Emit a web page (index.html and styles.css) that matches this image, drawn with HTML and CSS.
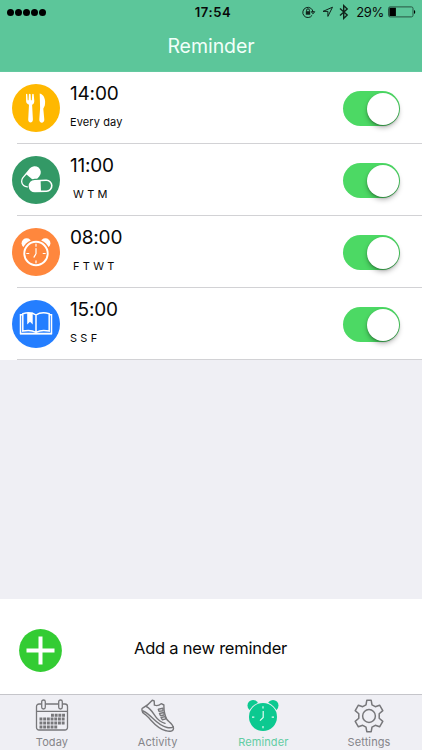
FILE: index.html
```html
<!DOCTYPE html>
<html lang="en">
<head>
<meta charset="utf-8">
<title>Reminder</title>
<link rel="stylesheet" href="styles.css">
</head>
<body>
<div class="app">
  <header class="header">
    <div class="status">
      <div class="signal"><i></i><i></i><i></i><i></i><i></i></div>
      <div class="clock">17:54</div>
      <div class="indicators">
        <svg width="14" height="12" viewBox="0 0 14 12" fill="none" stroke="#10231b" stroke-width="1"><path d="M10.2 9.2A5.1 5.1 0 1 1 11 6.2M9.3 5.7h3.4L11 7.8z"/><path d="M4.6 5.5V4.2a1.4 1.4 0 0 1 2.800 0v1.300"/><path d="M3.800 5.200h4.400v3.500H3.800z" fill="#10231b" stroke="none"/></svg>
        <svg class="loc" width="12" height="12" viewBox="0 0 12 12" fill="none" stroke="#10231b" stroke-width="1"><path d="M10.500 1.200 1 5.400h4.900v5z"/></svg>
        <svg class="bt" width="10" height="16" viewBox="0 0 10 16" fill="none" stroke="#10231b" stroke-width="1.400"><path d="m1 4.600 7.200 6.500L4.700 14.400V1.600l3.500 3.300L1 11.400"/></svg>
        <span class="percent">29%</span>
        <svg class="battery" width="28" height="12" viewBox="0 0 28 12"><rect x=".5" y=".9" width="24.500" height="10" rx="1.600" fill="none" stroke="#275542"/><path d="M1.400 1.800h6.500v8.200H1.400zM26 4c1.700.6 1.700 3.300 0 4z" fill="#000"/></svg>
      </div>
    </div>
    <h1 class="title">Reminder</h1>
  </header>

  <main class="list">
    <section class="row">
      <svg class="badge" viewBox="0 0 48 48"><circle cx="24" cy="24" r="24" fill="#ffb800"/><g fill="#fff"><path d="M14 10.300q.7-1.200 1.300 0l.4 6h.9l.3-6q.9-1.200 1.700 0l.3 6h.9l.4-6q.8-1.200 1.500 0l.6 6.600c0 2.100-.8 3-2.200 3.800l.8 14.900c.1 4-4.800 4-4.700 0l.8-14.900c-1.900-.8-2.900-1.800-2.900-4z"/><path d="M27.700 9.600c4.200.7 6.400 6.400 5.100 11.900l-1.500 3.200 1 10.800c.2 4.200-5.200 4.200-5 0l.8-11.600z"/></g></svg>
      <div class="info"><div class="time">14:00</div><div class="days every">Every day</div></div>
      <div class="switch"><i></i></div>
    </section>
    <section class="row">
      <svg class="badge" viewBox="0 0 48 48"><circle cx="24" cy="24" r="24" fill="#339966"/><g transform="translate(18.900 20.800) rotate(-50)"><rect x="-12" y="-6.200" width="24" height="12.400" rx="6.200" fill="#fff"/><path d="M-1-4.900h-4.800a4.900 4.900 0 0 0 0 9.800H-1z" fill="#339966"/></g><g transform="translate(28.600 29.900) rotate(-2)"><rect x="-13" y="-7.300" width="26" height="14.600" rx="7.300" fill="#339966"/><rect x="-12" y="-6.200" width="24" height="12.400" rx="6.200" fill="#fff"/><path d="M.2-4.700h5.500a4.700 4.700 0 0 1 0 9.400H.2z" fill="#339966"/></g></svg>
      <div class="info"><div class="time t11">11:00</div><div class="days pad wtm">W T M</div></div>
      <div class="switch"><i></i></div>
    </section>
    <section class="row">
      <svg class="badge" viewBox="0 0 48 48"><circle cx="24" cy="24" r="24" fill="#ff873d"/><circle cx="14.600" cy="15.200" r="5" fill="#fff"/><circle cx="33.400" cy="15.200" r="5" fill="#fff"/><circle cx="24" cy="25.500" r="14" fill="#ff873d"/><g fill="none" stroke="#fff" stroke-linecap="round"><circle cx="24" cy="25.500" r="11.700" stroke-width="1.900"/><path d="M24 16.200v2M24 32.800v2M14.800 25.500h2M31.200 25.500h2M24 20.500v5.200l-2 3.400" stroke-width="1.200"/></g></svg>
      <div class="info"><div class="time t08">08:00</div><div class="days pad ftwt">F T W T</div></div>
      <div class="switch"><i></i></div>
    </section>
    <section class="row">
      <svg class="badge" viewBox="0 0 48 48"><circle cx="24" cy="24" r="24" fill="#247eff"/><g fill="none" stroke="#fff" stroke-width="1.500"><path d="M24 15c-3.600-2.400-8.400-2.600-13.200-1.300v17.400c5.100-1.100 9.500-.8 13.200 1.200 3.700-2 8.100-2.300 13.200-1.200V13.700C32.400 12.400 27.600 12.600 24 15zv17"/><path d="M10.800 14.800H8.500v18.600h31V14.800h-2.300"/></g><path d="M8 33h32v1.500H8zM15.200 12.700h5.500v11.800L18 21.700l-2.800 2.800z" fill="#fff"/></svg>
      <div class="info"><div class="time t15">15:00</div><div class="days ssf">S S F</div></div>
      <div class="switch"><i></i></div>
    </section>
  </main>

  <section class="add">
    <svg class="plus" viewBox="0 0 43 43"><circle cx="21.500" cy="21.500" r="21.400" fill="#33cc33"/><path d="M21.500 7.500v28M7.500 21.500h28" stroke="#fff" stroke-width="4"/></svg>
    <span class="add-label">Add a new reminder</span>
  </section>

  <nav class="tabs">
    <div class="tab">
      <svg width="34" height="34" viewBox="0 0 34 34" fill="none" stroke="#77777a" stroke-width="1.300"><path d="M6.500 5H4a2.500 2.500 0 0 0-2.500 2.500v21A2.500 2.500 0 0 0 4 31h26a2.500 2.500 0 0 0 2.500-2.500v-21A2.500 2.500 0 0 0 30 5h-2.500M10.500 5h13M1.500 12.300h31"/><rect x="6.700" y="1" width="3.600" height="9" rx="1.800"/><rect x="23.700" y="1" width="3.600" height="9" rx="1.800"/><path d="M16 16.200h14M4.500 20h25.500M4.500 24h25.500M4.500 28h18" stroke-width="3" stroke-dasharray="2.900 .8"/></svg>
      <span class="today">Today</span>
    </div>
    <div class="tab">
      <svg width="34" height="34" viewBox="0 0 34 34" fill="none" stroke="#77777a" stroke-width="1.400" stroke-linejoin="round" stroke-linecap="round"><path d="M1.200 9.300C4 8 8.500 4.500 11.300 1.200l1.900.8.200 4.200c2.200.8 4.900.2 6.800-1.500l2.700 1.300c-.1 4 .8 10.200 3 14.500 1.500 2.200 6.500 4.400 6.600 8.700 0 3.100-3.600 3.700-7.500 2.500C14.500 29.500 9.500 19 3.700 15.200 1.300 13.500.6 11 1.200 9.300z"/><path d="M2.200 12C10 15 15.500 26.700 26 28.500c3 .6 5 .3 6.300-.8M5.300 7.500c4.500 2 6.500 6.200 9.300 10.200 3 4.400 6 5.700 9.400 6.700M17.300 10.300l4.700-1v2.500l-4 .6zM18.500 14.500l4.600-1v2.500l-3.600.6zM20 18.500l4.200-.9.700 2.300-3.600.8z"/></svg>
      <span class="activity">Activity</span>
    </div>
    <div class="tab active">
      <svg width="34" height="34" viewBox="0 0 34 34"><g fill="#0cc990"><circle cx="7" cy="6.500" r="5.500"/><circle cx="27" cy="6.500" r="5.500"/></g><circle cx="17" cy="18" r="15" fill="#efeff4"/><circle cx="17" cy="18" r="14" fill="#0cc990"/><path d="M17 7.200v2.300M17 27v2.300M6 18.200h2.300M25.700 18.200H28M17.200 12v6.500l-3.200 3.200" stroke="#e5fbf3" stroke-width="1.200" fill="none"/></svg>
      <span class="reminder">Reminder</span>
    </div>
    <div class="tab">
      <svg width="34" height="34" viewBox="0 0 34 34" fill="none" stroke="#77777a" stroke-width="1.500" stroke-linejoin="round"><path d="M14.800 1.300h4.400l.8 4.500 3.300 1.900 4.300-1.500 3.200 5.400-3.600 3.100v4.600l3.600 3.100-3.200 5.400-4.300-1.500-3.300 1.900-.8 4.500h-4.400l-.8-4.500-3.300-1.900-4.300 1.500-3.200-5.400 3.600-3.100v-4.600l-3.600-3.100 3.200-5.400 4.300 1.500L14 5.800z"/><circle cx="17" cy="17" r="6.400"/></svg>
      <span class="settings">Settings</span>
    </div>
  </nav>
</div>
</body>
</html>
```
FILE: styles.css
```css
* { box-sizing: border-box; }
body { margin: 0; font-family: Inter, Roboto, "Liberation Sans", sans-serif; color: #080808; }
.app { width: 422px; height: 750px; display: flex; flex-direction: column; background: #efeff4; overflow: hidden; }
svg { display: block; flex: none; }

.header { height: 72px; background: #5cc69a; border-bottom: 1px solid #64c9a0; }
.status { height: 24px; display: grid; grid-template-columns: 1fr auto 1fr; align-items: center; }
.signal { display: flex; gap: 1px; padding-left: 7px; }
.signal i { width: 7px; height: 7px; border-radius: 50%; background: #000; }
.clock { font-size: 13px; font-weight: 600; letter-spacing: .6px; line-height: 24px; padding-left: 4px; }
.indicators { display: flex; align-items: center; justify-content: flex-end; padding-right: 6px; }
.loc { margin-left: 6px; }
.bt { margin-left: 5px; }
.percent { font-size: 13px; margin-left: 7px; letter-spacing: -.3px; }
.battery { margin-left: 4px; }
.title { margin: 0; height: 44px; line-height: 44px; text-align: center; font-size: 19.500px; font-weight: 400; letter-spacing: -.05px; color: #f1fff9; }

.list { background: #fff; }
.row { height: 72px; padding: 0 22px 0 12px; display: flex; align-items: center; background: linear-gradient(#d2d2d5, #d2d2d5) 17px 71px / 405px 1px no-repeat; }
.badge { width: 48px; height: 48px; }
.info { flex: 1; height: 72px; padding: 9px 0 0 10px; }
.time { height: 26px; line-height: 26px; font-size: 19px; letter-spacing: -.2px; }
.days { height: 16px; margin-top: 7px; line-height: 16px; font-size: 11px; letter-spacing: .1px; white-space: pre; }
.pad { padding-left: 3px; }
.switch { width: 57px; height: 35px; margin-top: 1px; border-radius: 18px; background: #4cd964; display: flex; justify-content: flex-end; padding: 1.500px; }
.switch i { width: 32px; height: 32px; border-radius: 50%; background: #fff; box-shadow: 0 3px 5px rgba(0,0,0,.25), 0 1px 2px rgba(0,0,0,.25); }

.add { height: 95px; margin-top: auto; background: #fff; display: flex; align-items: center; padding: 7px 0 0 19px; }
.plus { width: 43px; height: 43px; }
.add-label { margin-left: 72px; font-size: 16.500px; letter-spacing: -.22px; line-height: 22px; padding-bottom: 5px; }

.tabs { height: 56px; border-top: 1px solid #c5c5ca; display: grid; grid-template-columns: repeat(4, 105.700px); justify-content: center; }
.tab { display: flex; flex-direction: column; align-items: center; padding-top: 4px; font-size: 11px; color: #858589; position: relative; left: -.5px; }
.tab span { line-height: 14px; margin-top: 2px; letter-spacing: .1px; }
.active { color: #62cda3; }
```
